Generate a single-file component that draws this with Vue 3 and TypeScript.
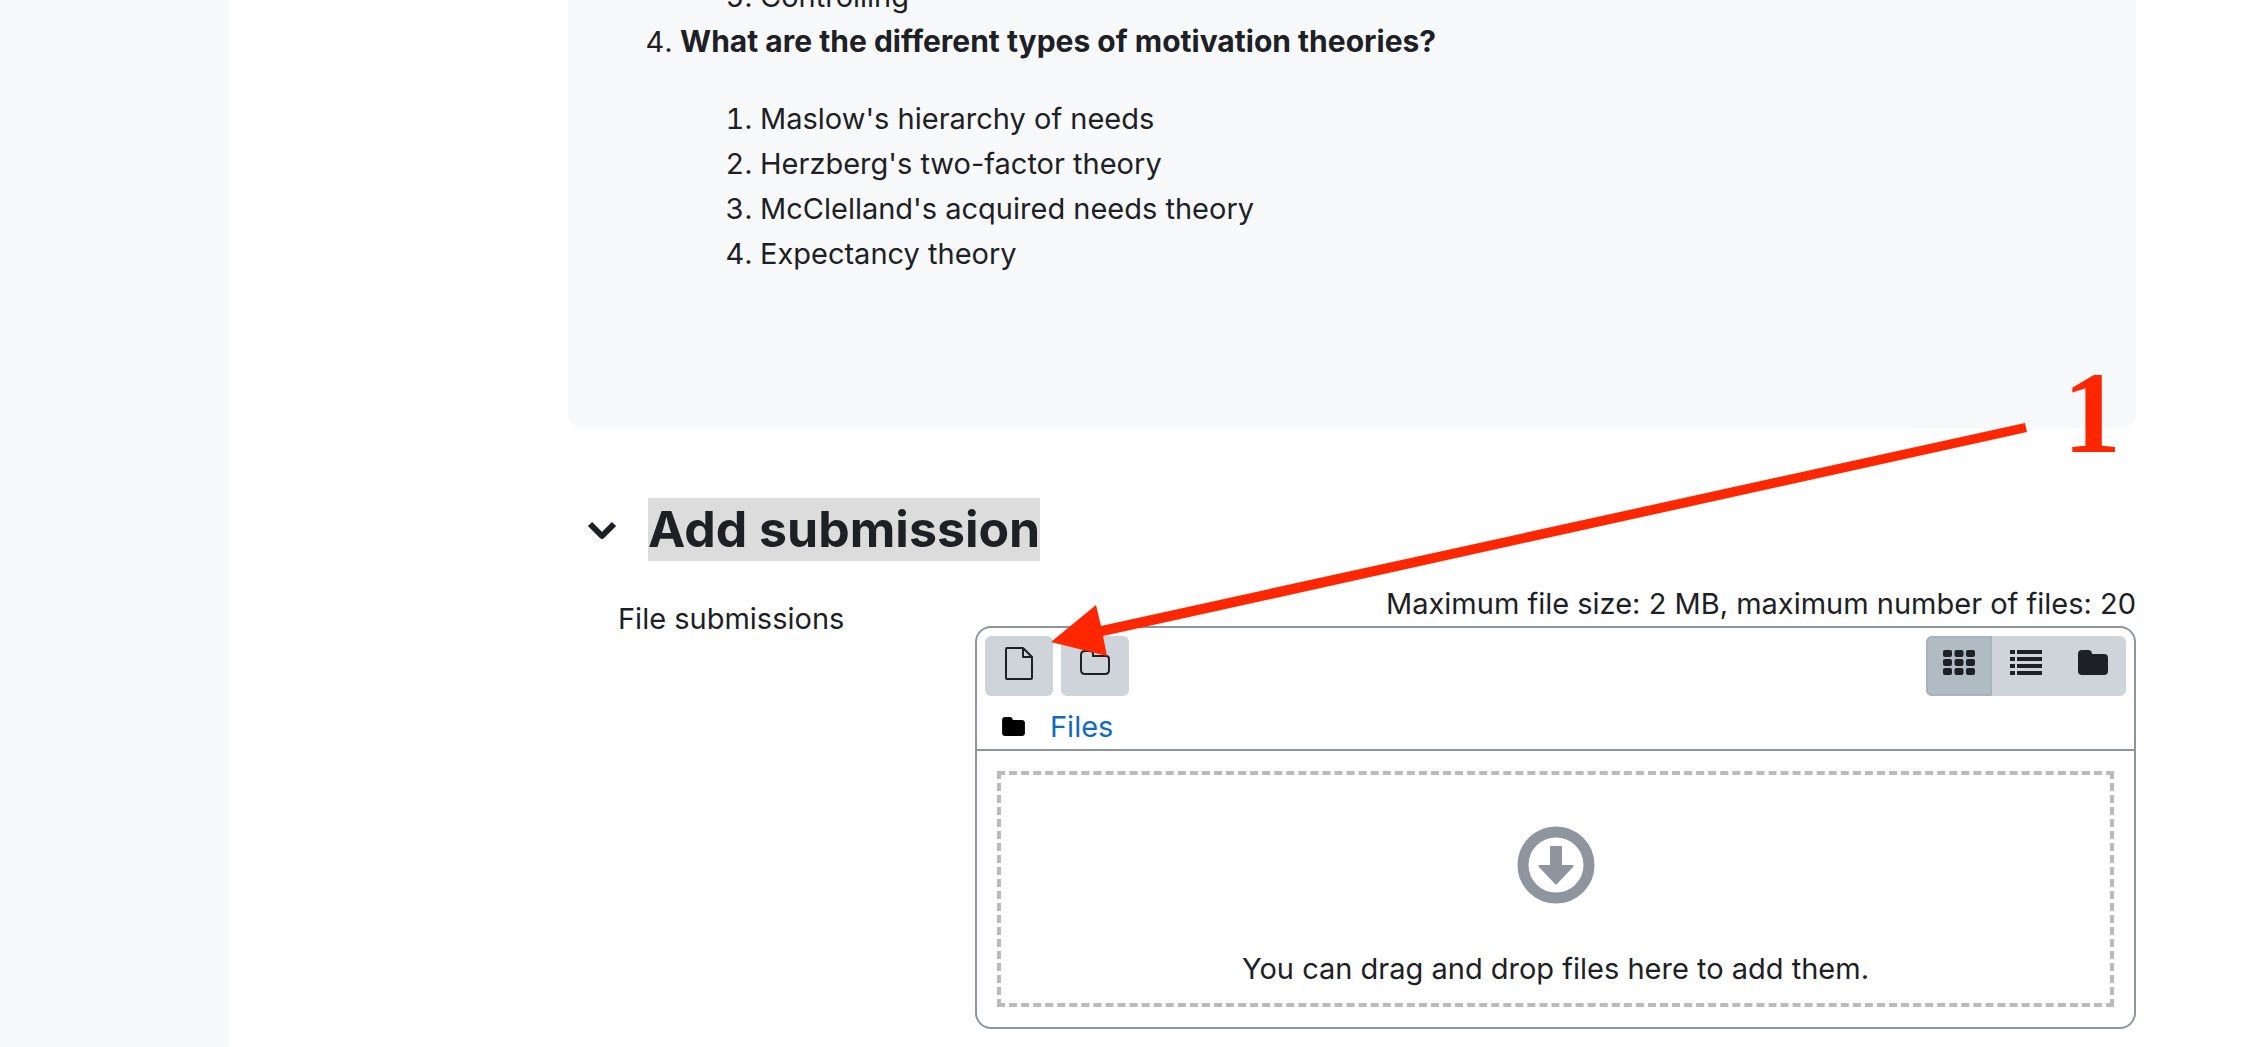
<script setup lang="ts">
import { ref } from 'vue'

type View = 'icons' | 'details' | 'tree'

const view = ref<View>('icons')
const open = ref(true)
const theories: string[] = [
  "Maslow's hierarchy of needs",
  "Herzberg's two-factor theory",
  "McClelland's acquired needs theory",
  'Expectancy theory',
]
const cells = [0, 1, 2].flatMap((r) => [0, 1, 2].map((c) => ({ x: c * 23, y: r * 18 })))
</script>

<template>
  <div class="page">
    <aside class="drawer"></aside>
    <main class="content">
      <section class="intro">
        <ol class="questions" start="3">
          <li class="tail">
            <ol start="5">
              <li>Controlling</li>
            </ol>
          </li>
          <li value="4">
            <strong>What are the different types of motivation theories?</strong>
            <ol class="answers">
              <li v-for="t in theories" :key="t">{{ t }}</li>
            </ol>
          </li>
        </ol>
      </section>

      <section class="submission">
        <header class="section-head">
          <button class="toggle" type="button" aria-label="Collapse Add submission" :aria-expanded="open" @click="open = !open">
            <svg width="30" height="22" viewBox="0 0 30 22" fill="none" stroke="#1d2125" stroke-width="6" stroke-linejoin="round">
              <path d="M3 5 15 17 27 5" />
            </svg>
          </button>
          <h3><span>Add submission</span></h3>
        </header>

        <div class="row">
          <p id="files-label" class="label">File submissions</p>
          <div class="field" role="group" aria-labelledby="files-label">
            <p class="limits">Maximum file size: 2 MB, maximum number of files: 20</p>
            <div class="manager">
              <div class="toolbar">
                <div class="tools">
                  <button class="btn" type="button" aria-label="Add file">
                    <svg width="28" height="34" viewBox="0 0 28 34" fill="none" stroke="#1d2125" stroke-width="2" stroke-linejoin="round">
                      <path d="M2 2H18L27 11V32Q27 33 26 33H2Q1 33 1 32V3Q1 2 2 2Z" />
                      <path d="M18 2V11H27" />
                    </svg>
                  </button>
                  <button class="btn" type="button" aria-label="Create folder">
                    <svg width="30" height="34" viewBox="0 0 30 34" fill="none" stroke="#1d2125" stroke-width="2">
                      <path d="M5 5H10Q13 5 13 8V10H26Q29 10 29 13V24Q29 28 25 28H5Q1 28 1 24V9Q1 5 5 5Z" />
                    </svg>
                  </button>
                </div>
                <div class="views">
                  <button class="btn" :class="{ active: view === 'icons' }" type="button" aria-label="Icons" @click="view = 'icons'">
                    <svg width="32" height="34" viewBox="0 0 64 68" fill="#1d2125">
                      <rect v-for="c in cells" :key="`${c.x}-${c.y}`" :x="c.x" :y="c.y + 8" width="18" height="14" rx="4" />
                    </svg>
                  </button>
                  <button class="btn" :class="{ active: view === 'details' }" type="button" aria-label="Details" @click="view = 'details'">
                    <svg width="32" height="34" viewBox="0 0 32 34" fill="#1d2125">
                      <path d="M0 4h5v4H0zM7 4h25v4H7zM0 11h5v4H0zM7 11h25v4H7zM0 18h5v4H0zM7 18h25v4H7zM0 25h5v4H0zM7 25h25v4H7z" />
                    </svg>
                  </button>
                  <button class="btn" :class="{ active: view === 'tree' }" type="button" aria-label="Tree" @click="view = 'tree'">
                    <svg width="30" height="34" viewBox="0 0 30 34" fill="#1d2125">
                      <path d="M4 4H10Q14 4 14 8H26Q30 8 30 12V25Q30 29 26 29H4Q0 29 0 25V8Q0 4 4 4Z" />
                    </svg>
                  </button>
                </div>
              </div>
              <nav class="path">
                <svg width="23" height="19" viewBox="0 0 30 25">
                  <path d="M4 0H10Q14 0 14 4H26Q30 4 30 8V21Q30 25 26 25H4Q0 25 0 21V4Q0 0 4 0Z" />
                </svg>
                <a href="#">Files</a>
              </nav>
              <div class="drop-area">
                <div class="drop">
                  <svg width="78" height="78" viewBox="0 0 78 78" fill="#8f959e">
                    <circle cx="39" cy="39" r="33" fill="none" stroke="#8f959e" stroke-width="11" />
                    <path d="M34 20H44Q45 20 45 21V39H56Q57 40 56 41L40 58Q39 59 38 58L22 41Q21 40 22 39H33V21Q33 20 34 20Z" />
                  </svg>
                  <p>You can drag and drop files here to add them.</p>
                </div>
              </div>
            </div>
          </div>
        </div>
      </section>

      <div class="callout">
        <svg width="980" height="240" viewBox="0 0 980 240" fill="#ff2600">
          <path d="M4 222 49 185 54 206 978 3 980 12 56 216 60 236Z" />
        </svg>
        <span>1</span>
      </div>
    </main>
  </div>
</template>

<style>
body {
  margin: 0;
  background: #fff;
}
</style>

<style scoped>
.page {
  display: flex;
  height: 100vh;
  overflow: hidden;
  color: #1d2125;
  font: 29px/45px Inter, "Liberation Sans", sans-serif;
}
.drawer {
  flex: 0 0 229px;
  background: #f8f9fb;
}
.content {
  position: relative;
  flex: 1;
  min-width: 0;
  padding: 0 115px 0 339px;
}
p,
h3,
ol {
  margin: 0;
}
ol {
  padding-left: 80px;
}
strong {
  font-size: 30px;
}
.intro {
  margin-top: -26px;
  padding: 0 32px 153px;
  border-radius: 16px;
  background: #f8f9fb;
}
.tail {
  list-style: none;
}
.answers {
  margin-top: 32px;
}
.section-head {
  display: flex;
  align-items: center;
  gap: 18px;
  margin-top: 69px;
  padding-left: 6px;
}
.toggle {
  display: flex;
  align-items: center;
  justify-content: center;
  width: 56px;
  height: 56px;
  padding: 0;
  border: 0;
  background: none;
}
h3 {
  font-size: 50px;
  line-height: 63px;
}
h3 span {
  display: block;
  background: #dcdcdc;
}
.row {
  display: grid;
  grid-template-columns: 407px 1fr;
  margin-top: 21px;
}
.label {
  padding: 14px 0 0 50px;
}
.limits {
  line-height: 44px;
  text-align: right;
}
.manager {
  border: 2px solid #8f959e;
  border-radius: 16px;
}
.toolbar {
  display: flex;
  justify-content: space-between;
  padding: 8px;
}
.tools {
  display: flex;
  gap: 8px;
}
.views {
  display: flex;
}
.btn {
  display: flex;
  align-items: flex-start;
  justify-content: center;
  width: 68px;
  height: 60px;
  padding: 10px 0 0;
  border: 0;
  border-radius: 6px;
  background: #ced4da;
}
.views .btn {
  width: 67px;
  border-radius: 0;
}
.views .btn:first-child {
  width: 66px;
  border-radius: 6px 0 0 6px;
}
.views .btn:last-child {
  border-radius: 0 6px 6px 0;
}
.btn.active {
  background: #b1bbc4;
  box-shadow: inset 0 0 0 2px #a8b3bd;
}
.path {
  display: flex;
  align-items: center;
  gap: 25px;
  padding: 0 25px;
  border-bottom: 2px solid #8f959e;
}
.path a {
  color: #0f6cbf;
  text-decoration: none;
}
.drop-area {
  padding: 20px;
}
.drop {
  display: flex;
  flex-direction: column;
  align-items: center;
  gap: 42px;
  padding: 51px 0 12px;
  border: 4px dashed #bbb;
}
.callout {
  position: absolute;
  top: 420px;
  left: 818px;
  color: #ff2600;
  pointer-events: none;
}
.callout svg {
  display: block;
}
.callout span {
  position: absolute;
  top: -67px;
  left: 1016px;
  font: bold 116px/120px "Liberation Serif", serif;
}
</style>
